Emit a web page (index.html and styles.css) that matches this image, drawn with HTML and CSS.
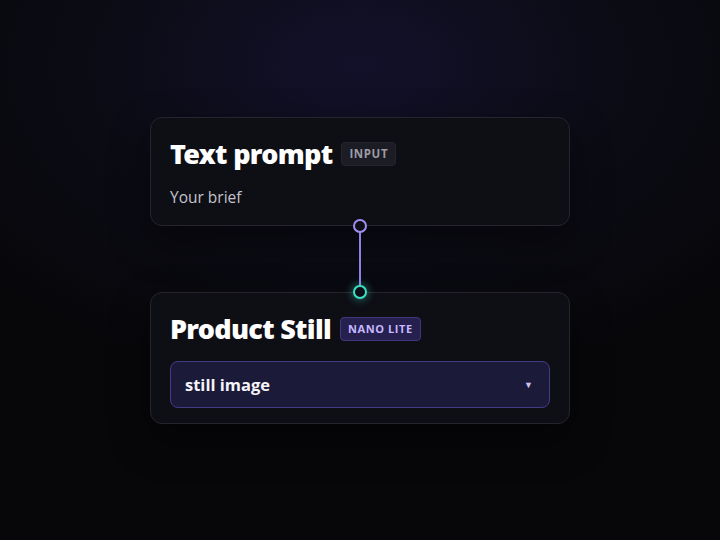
FILE: index.html
```html
<!DOCTYPE html>
<html lang="en">
<head>
    <meta charset="UTF-8">
    <meta name="viewport" content="width=device-width, initial-scale=1.0">
    <title>Pipeline</title>
    <link rel="stylesheet" href="styles.css">
</head>
<body>
    <div class="canvas">
        <div class="node">
            <div class="node-head">
                <h2>Text prompt</h2>
                <span class="tag">INPUT</span>
            </div>
            <div class="hint">Your brief</div>
        </div>

        <div class="link">
            <span class="port port-out"></span>
            <span class="wire"></span>
            <span class="port port-in"></span>
        </div>

        <div class="node node-model">
            <div class="node-head">
                <h2>Product Still</h2>
                <span class="tag tag-model">NANO LITE</span>
            </div>
            <div class="select">
                <span>still image</span>
                <span class="caret">&#9660;</span>
            </div>
        </div>
    </div>
</body>
</html>
```

FILE: styles.css
```css
html, body {
    height: 100%;
}
body {
    margin: 0;
    font-family: "Open Sans", "Noto Sans", sans-serif;
    color: #f4f4f7;
    background: radial-gradient(ellipse 70% 60% at 50% 12%, #13112a 0%, #0b0b14 55%, #07070a 100%);
}
.canvas {
    height: 100%;
    display: flex;
    flex-direction: column;
    align-items: center;
    justify-content: center;
}
.node {
    width: 420px;
    box-sizing: border-box;
    padding: 20px 19px 17px;
    background: #0e0e15;
    border: 1px solid #26252f;
    border-radius: 12px;
    box-shadow: 0 16px 40px rgba(0, 0, 0, 0.45);
}
.node-model {
    padding-bottom: 15px;
}
.node-head {
    display: flex;
    align-items: center;
    gap: 9px;
    margin-bottom: 16px;
}
.node-head h2 {
    margin: 0;
    font-family: "Noto Sans", sans-serif;
    font-weight: 900;
    font-size: 27px;
    line-height: 32px;
    letter-spacing: -0.7px;
    color: #ffffff;
}
.tag {
    padding: 4px 7px;
    font-size: 11.5px;
    font-weight: 700;
    letter-spacing: 0.6px;
    line-height: 14px;
    color: #9c9ba6;
    background: #1c1c24;
    border: 1px solid #25252e;
    border-radius: 4px;
}
.tag-model {
    font-size: 11px;
    color: #c6b9ff;
    background: #26204f;
    border-color: #3f3680;
}
.hint {
    font-size: 15.5px;
    color: #c4c3cd;
    line-height: 22px;
}
.select {
    display: flex;
    align-items: center;
    justify-content: space-between;
    height: 47px;
    box-sizing: border-box;
    padding: 0 16px 0 14px;
    background: #1c1a39;
    border: 1px solid #443a86;
    border-radius: 8px;
    font-size: 16.5px;
    font-weight: 700;
    color: #f4f4fa;
}
.caret {
    font-size: 9px;
    color: #c9c2f0;
}
.link {
    position: relative;
    width: 20px;
    height: 66px;
}
.wire {
    position: absolute;
    left: 9px;
    top: 6px;
    width: 2px;
    height: 54px;
    background: #8f7fe6;
}
.port {
    position: absolute;
    left: 3px;
    width: 10px;
    height: 10px;
    border-radius: 50%;
    background: #0f0e18;
    z-index: 2;
}
.port-out {
    top: -7px;
    border: 2px solid #a18ff2;
}
.port-in {
    bottom: -7px;
    border: 2px solid #3ee0c2;
    box-shadow: 0 0 10px rgba(62, 224, 194, 0.6);
}
```
